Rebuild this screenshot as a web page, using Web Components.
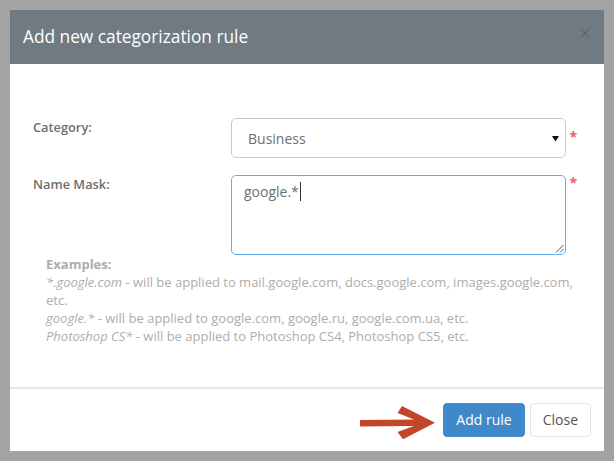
<!DOCTYPE html>
<html>
<head>
<meta charset="utf-8">
<style>
  html, body { margin: 0; height: 100%; }
  body { font-family: "Open Sans", "Liberation Sans", sans-serif; background: #a3a3a3; }
</style>
</head>
<body>
<rule-modal heading="Add new categorization rule">
  <form-row label="Category:" star="10">
    <select-box value="Business"></select-box>
  </form-row>
  <form-row label="Name Mask:" star="-1">
    <mask-area value="google.*"></mask-area>
  </form-row>
  <examples-note>
    <b>Examples:</b><br>
    <i>*.google.com</i> - will be applied to mail.google.com, docs.google.com, images.google.com,<br>etc.<br>
    <i>google.*</i> - will be applied to google.com, google.ru, google.com.ua, etc.<br>
    <i>Photoshop CS*</i> - will be applied to Photoshop CS4, Photoshop CS5, etc.
  </examples-note>
  <hint-arrow slot="footer"></hint-arrow>
  <modal-button slot="footer" kind="primary">Add rule</modal-button>
  <modal-button slot="footer">Close</modal-button>
</rule-modal>

<script>
class RuleModal extends HTMLElement {
  constructor() {
    super();
    this.shadowDOM = this.attachShadow({ mode: 'open' });
  }

  connectedCallback() {
    this.shadowDOM.innerHTML = `
      <style>
        :host { display: block; padding: 10px; height: 441px; }
        .dialog {
          display: flex;
          flex-direction: column;
          width: 594px;
          height: 441px;
          background: #fff;
        }
        header {
          display: flex;
          justify-content: space-between;
          height: 54px;
          padding: 0 14px 0 13px;
          background: #6f7a82;
          color: #fff;
          box-sizing: border-box;
        }
        h4 { margin: 14px 0 0; font-size: 17.3px; font-weight: 400; line-height: 25px; }
        svg { margin-top: 18px; }
        main { flex: 1; padding: 54px 0 0 23px; }
        footer {
          display: flex;
          align-items: flex-start;
          justify-content: flex-end;
          gap: 5px;
          height: 64px;
          padding: 14px 13px 0 0;
          border-top: 2px solid #e6e6e6;
          box-sizing: border-box;
        }
      </style>
      <div class="dialog">
        <header>
          <h4>${this.getAttribute('heading')}</h4>
          <svg width="10" height="10" viewBox="0 0 10 10" fill="none" stroke="#5c666d" stroke-width="1.4">
            <path d="M1 1l8 8M9 1l-8 8"/>
          </svg>
        </header>
        <main><slot></slot></main>
        <footer><slot name="footer"></slot></footer>
      </div>
    `;
  }
}

class FormRow extends HTMLElement {
  constructor() {
    super();
    this.shadowDOM = this.attachShadow({ mode: 'open' });
  }

  connectedCallback() {
    this.shadowDOM.innerHTML = `
      <style>
        :host {
          display: grid;
          grid-template-columns: 198px 335px auto;
          margin-bottom: 17px;
        }
        label {
          font-size: 12.8px;
          font-weight: 600;
          line-height: 18px;
          color: #6e6e6e;
        }
        .star {
          margin: ${this.getAttribute('star')}px 0 0 3.5px;
          font-size: 14px;
          font-weight: 700;
          line-height: 18px;
          color: #ea5f68;
        }
      </style>
      <label>${this.getAttribute('label')}</label>
      <slot></slot>
      <span class="star">*</span>
    `;
  }
}

class SelectBox extends HTMLElement {
  constructor() {
    super();
    this.shadowDOM = this.attachShadow({ mode: 'open' });
  }

  connectedCallback() {
    this.shadowDOM.innerHTML = `
      <style>
        :host {
          display: flex;
          align-items: center;
          justify-content: space-between;
          height: 40px;
          padding: 0 6px 0 16px;
          border: 1px solid #c9c9c9;
          border-radius: 5px;
          box-sizing: border-box;
          font-size: 14px;
          color: #6e6e6e;
        }
      </style>
      <span>${this.getAttribute('value')}</span>
      <svg width="7" height="7" viewBox="0 0 7 7"><path d="M0 1h7L3.5 6.5z" fill="#111"/></svg>
    `;
  }
}

class MaskArea extends HTMLElement {
  constructor() {
    super();
    this.shadowDOM = this.attachShadow({ mode: 'open' });
  }

  connectedCallback() {
    this.shadowDOM.innerHTML = `
      <style>
        :host {
          display: block;
          position: relative;
          height: 80px;
          padding: 6px 12px;
          border: 1px solid #62aee8;
          border-radius: 5px;
          box-sizing: border-box;
          font-size: 14px;
          line-height: 20px;
          color: #6e6e6e;
        }
        .caret { border-left: 1px solid #333; margin-left: 1px; }
        svg { position: absolute; right: 1px; bottom: 1px; }
      </style>
      <span>${this.getAttribute('value')}</span><span class="caret"></span>
      <svg width="9" height="9" viewBox="0 0 9 9" stroke="#555" fill="none">
        <path d="M1 8.5L8.5 1M5 8.5L8.5 5"/>
      </svg>
    `;
  }
}

class ExamplesNote extends HTMLElement {
  constructor() {
    super();
    this.shadowDOM = this.attachShadow({ mode: 'open' });
  }

  connectedCallback() {
    this.shadowDOM.innerHTML = `
      <style>
        :host {
          display: block;
          width: 535px;
          margin: -17px 0 0 13px;
          font-size: 13px;
          line-height: 18px;
          color: #adadad;
        }
      </style>
      <slot></slot>
    `;
  }
}

class ModalButton extends HTMLElement {
  constructor() {
    super();
    this.shadowDOM = this.attachShadow({ mode: 'open' });
  }

  connectedCallback() {
    this.shadowDOM.innerHTML = `
      <style>
        :host {
          display: block;
          height: 34px;
          padding: 0 12px;
          border: 1px solid #e2e2e2;
          border-radius: 4px;
          box-sizing: border-box;
          background: #fff;
          color: #555;
          font-size: 14px;
          line-height: 32px;
        }
        :host([kind="primary"]) {
          border-color: #3f88c9;
          background: #3f88c9;
          color: #fff;
        }
      </style>
      <slot></slot>
    `;
  }
}

class HintArrow extends HTMLElement {
  constructor() {
    super();
    this.shadowDOM = this.attachShadow({ mode: 'open' });
  }

  connectedCallback() {
    this.shadowDOM.innerHTML = `
      <style>
        :host { display: block; width: 79px; height: 36px; margin-top: 3px; }
      </style>
      <svg width="79" height="36" viewBox="0 0 79 36">
        <path d="M1 14L55 13.500 38.500 7 43 0 76 16.700 44 33.300 38.500 26 55 20 1 20.500z" fill="#c2462a"/>
      </svg>
    `;
  }
}

customElements.define('rule-modal', RuleModal);
customElements.define('form-row', FormRow);
customElements.define('select-box', SelectBox);
customElements.define('mask-area', MaskArea);
customElements.define('examples-note', ExamplesNote);
customElements.define('modal-button', ModalButton);
customElements.define('hint-arrow', HintArrow);
</script>
</body>
</html>
